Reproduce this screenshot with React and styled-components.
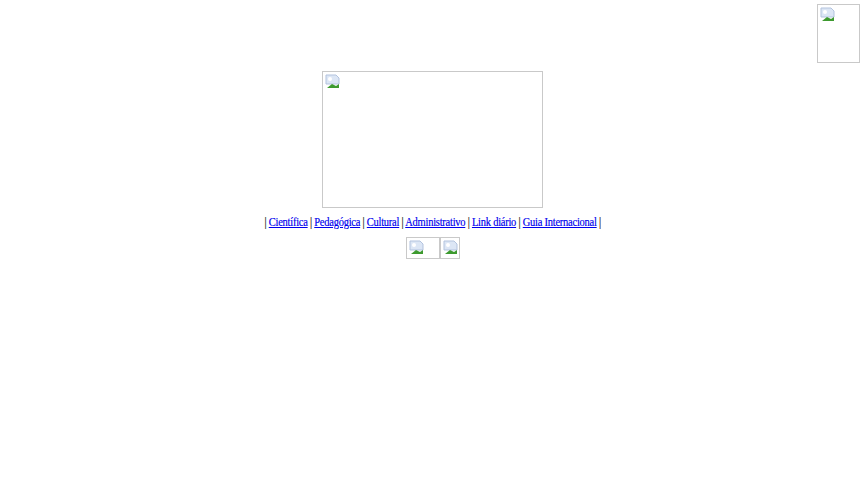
import React from "react";
import styled, { createGlobalStyle } from "styled-components";

const GlobalStyle = createGlobalStyle`
  body {
    margin: 0;
    background: #ffffff;
    font-family: "Liberation Serif", "Times New Roman", serif;
  }
`;

const Page = styled.div`
  display: flex;
  flex-direction: column;
  align-items: center;
`;

const TopBar = styled.div`
  align-self: stretch;
  display: flex;
  justify-content: flex-end;
  padding: 4px 5px 0 0;
`;

const Broken = styled.div`
  box-sizing: border-box;
  width: ${(p) => p.w}px;
  height: ${(p) => p.h}px;
  border: 1px solid #c9c9c9;
  padding: 2px;
  background: #fff;
`;

const Banner = styled.div`
  margin-top: 8px;
`;

/* the original face is a narrow Times, tighten ours to the same width */
const Menu = styled.div`
  margin-top: 6px;
  font-size: 13px;
  line-height: 15px;
  letter-spacing: -0.3px;
  color: #111;
  white-space: nowrap;
  transform: scaleX(0.806);
  -webkit-text-stroke: 0.2px currentColor;
`;

const MenuLink = styled.a`
  color: #0000ee;
  text-decoration: underline;
`;

const ButtonRow = styled.div`
  display: flex;
  margin-top: 8px;
`;

const BrokenIcon = () => (
  <svg width="16" height="16" viewBox="0 0 16 16">
    <path d="M1 1h10l3 3v6H1z" fill="#dce6f5" stroke="#b3c3de" strokeWidth="1" />
    <circle cx="5" cy="5" r="2" fill="#ffffff" />
    <path d="M2 14l5-4 4 2 3-2v4z" fill="#3d9a2f" />
  </svg>
);

const Img = ({ w, h }) => (
  <Broken w={w} h={h}>
    <BrokenIcon />
  </Broken>
);

const links = [
  "Científica",
  "Pedagógica",
  "Cultural",
  "Administrativo",
  "Link diário",
  "Guia Internacional",
];

export default function App() {
  return (
    <Page>
      <GlobalStyle />
      <TopBar>
        <Img w={43} h={59} />
      </TopBar>
      <Banner>
        <Img w={221} h={137} />
      </Banner>
      <Menu>
        |{" "}
        {links.map((l) => (
          <React.Fragment key={l}>
            <MenuLink href="#">{l}</MenuLink> |{" "}
          </React.Fragment>
        ))}
      </Menu>
      <ButtonRow>
        <Img w={34} h={22} />
        <Img w={20} h={22} />
      </ButtonRow>
    </Page>
  );
}
